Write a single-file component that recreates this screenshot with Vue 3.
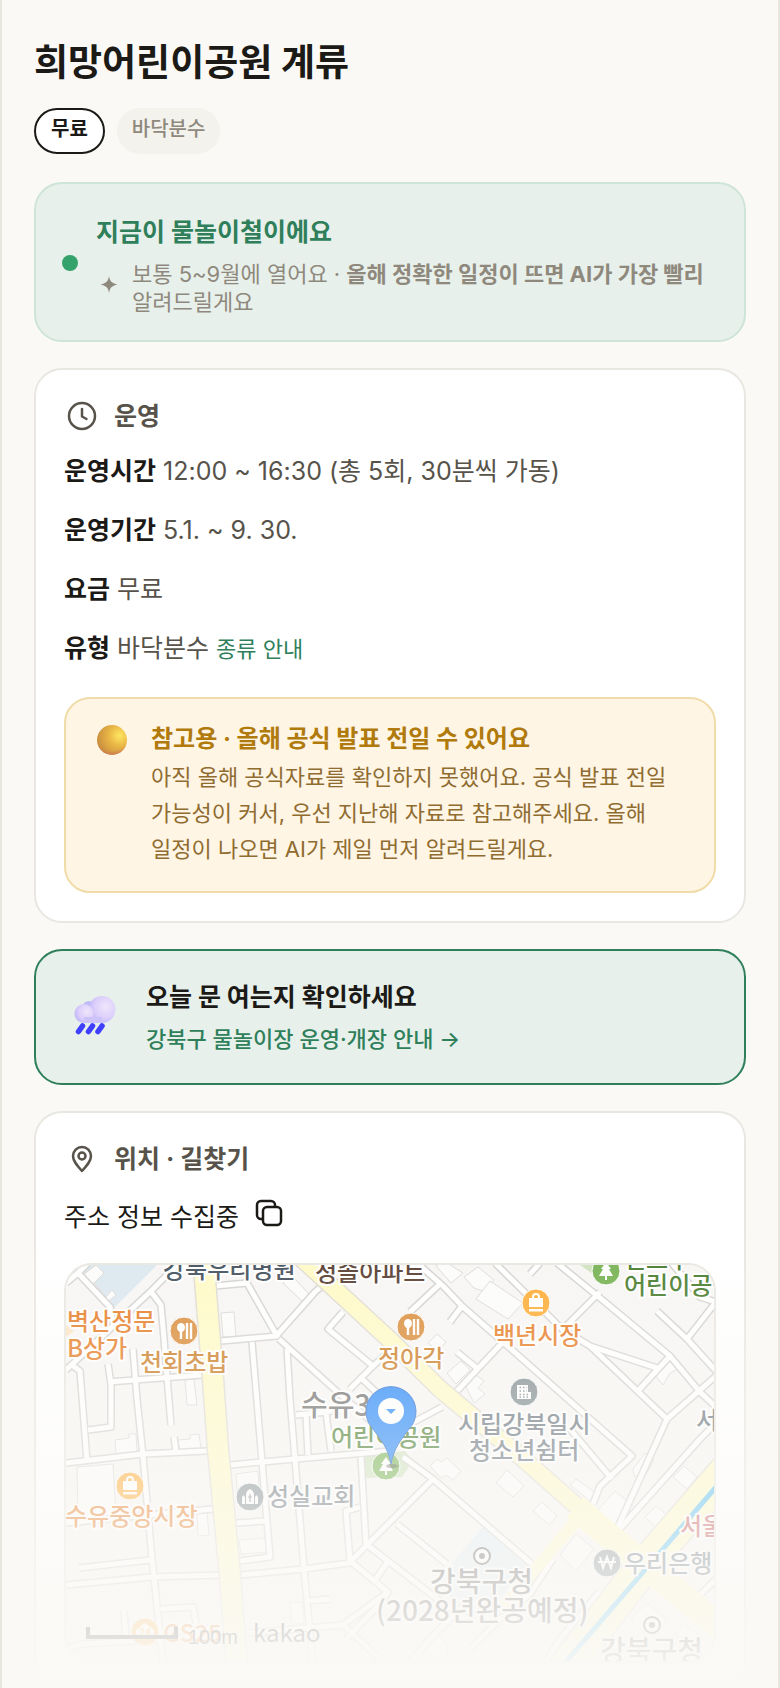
<script setup>
import { ref } from 'vue'

// Datos del lugar
const lugar = {
  nombre: '희망어린이공원 계류',
  precio: '무료',
  tipo: '바닥분수',
  direccion: '주소 정보 수집중'
}

const filas = [
  { etiqueta: '운영시간', valor: '12:00 ~ 16:30 (총 5회, 30분씩 가동)' },
  { etiqueta: '운영기간', valor: '5.1. ~ 9. 30.' },
  { etiqueta: '요금', valor: '무료' },
  { etiqueta: '유형', valor: '바닥분수', enlace: '종류 안내' }
]

// Mapa: calles blancas
const calles = [
  '66,1371 110,1330 150,1293 179,1264',
  '66,1284 78,1274 110,1308 114,1328',
  '78,1274 88,1264',
  '152,1294 161,1306 164,1340 167,1378 171,1426',
  '72,1366 80,1372 87,1462',
  '133,1350 137,1400 143,1457 152,1560 157,1607 163,1666',
  '108,1365 111,1385 111,1428 88,1431',
  '108,1383 202,1376',
  '66,1464 143,1455 207,1452',
  '174,1438 176,1453',
  '66,1524 148,1516 213,1510',
  '66,1586 152,1578 222,1576',
  '79,1569 150,1561',
  '66,1650 82,1645 228,1636',
  '160,1610 193,1608 198,1636',
  '124,1612 126,1640',
  '215,1287 247,1284 277,1337 221,1342',
  '277,1336 315,1293 332,1278',
  '279,1340 343,1398 392,1440',
  '252,1343 262,1463 270,1558 240,1562',
  '287,1350 290,1400 295,1460 304,1570 313,1666',
  '230,1466 295,1460 390,1452',
  '296,1416 318,1414 332,1412',
  '306,1416 308,1456',
  '326,1414 331,1452',
  '236,1524 266,1522',
  '240,1576 304,1570 349,1564 367,1546 433,1480',
  '361,1458 366,1545 388,1562 440,1602 470,1622',
  '360,1508 346,1512 350,1562 388,1593 343,1626 380,1660',
  '388,1562 376,1580',
  '388,1593 380,1605 346,1640',
  '247,1634 343,1626',
  '308,1602 330,1600',
  '397,1525 447,1565',
  '403,1458 433,1480 533,1566',
  '343,1313 328,1330 373,1367 350,1390',
  '360,1378 410,1425 442,1408',
  '373,1367 392,1350',
  '410,1313 441,1284',
  '417,1264 443,1287 462,1307 503,1343 632,1457 600,1487 593,1505',
  '462,1307 450,1323',
  '503,1343 457,1392',
  '457,1353 478,1370',
  '495,1264 562,1330 590,1347 667,1420',
  '600,1293 563,1330',
  '557,1264 600,1299 670,1357 700,1393 716,1408',
  '530,1275 540,1264',
  '657,1312 687,1340 716,1372',
  '716,1303 687,1340',
  '670,1262 700,1298 716,1303',
  '716,1377 667,1420 617,1530',
  '670,1357 637,1393',
  '590,1347 657,1369',
  '570,1430 612,1480',
  '617,1533 700,1440 716,1424',
  '553,1560 530,1595 500,1620 470,1650',
  '600,1592 560,1640 545,1664',
  '716,1580 690,1606',
  '470,1600 430,1640 410,1664'
]

// Mapa: edificios
const edificios = [
  '83,1276 96,1266 104,1274 94,1284 106,1298 112,1291 116,1296 104,1306',
  '221,1314 234,1313 236,1338 223,1338',
  '283,1284 292,1277 310,1296 303,1303',
  '185,1381 194,1380 197,1406 187,1406',
  '115,1441 129,1439 129,1435 136,1435 137,1453 116,1455',
  '178,1441 190,1440 190,1436 199,1435 201,1449 180,1452',
  '197,1515 207,1513 209,1536 198,1537',
  '77,1468 113,1465 116,1520 78,1522',
  '236,1475 258,1472 260,1500 238,1502',
  '239,1541 266,1539 267,1553 241,1555',
  '290,1604 302,1603 304,1624 292,1625',
  '436,1267 444,1262 463,1274 451,1284',
  '464,1278 478,1268 494,1281 483,1292 474,1289',
  '476,1300 490,1282 523,1304 508,1320',
  '428,1344 437,1335 446,1343 439,1352',
  '447,1374 461,1362 470,1371 456,1385',
  '466,1388 476,1376 484,1382 478,1389 485,1395 474,1404',
  '653,1374 670,1360 678,1370 670,1374 663,1386',
  '430,1467 437,1460 441,1463 447,1459 461,1472 453,1481 446,1476 441,1479',
  '496,1484 507,1471 524,1487 513,1498',
  '533,1512 542,1503 557,1517 549,1526',
  '570,1486 576,1480 596,1494 590,1502',
  '633,1470 645,1454 654,1461 643,1480 634,1477',
  '673,1478 684,1467 697,1478 687,1490',
  '645,1518 656,1507 668,1517 657,1529',
  '598,1511 615,1492 634,1508 616,1527',
  '560,1556 576,1535 594,1550 584,1562 576,1572',
  '630,1620 647,1604 668,1622 650,1640',
  '675,1634 684,1624 702,1640 694,1650',
  '420,1650 438,1636 448,1646 446,1662'
]

// Mapa: textos
const textos = [
  { t: '강북우리병원', x: 163, y: 1279, c: 'hospital' },
  { t: '정솔아파트', x: 315, y: 1282, c: 'piso' },
  { t: '벽산정문', x: 67, y: 1331, c: 'tienda' },
  { t: 'B상가', x: 67, y: 1358, c: 'tienda' },
  { t: '천회초밥', x: 140, y: 1372, c: 'comida' },
  { t: '정아각', x: 378, y: 1368, c: 'comida' },
  { t: '백년시장', x: 493, y: 1345, c: 'tienda' },
  { t: '인트구', x: 624, y: 1269, c: 'parque' },
  { t: '어린이공원', x: 624, y: 1295, c: 'parque' },
  { t: '수유3동', x: 301, y: 1417, c: 'barrio' },
  { t: '어린이공원', x: 331, y: 1447, c: 'parque' },
  { t: '시립강북일시', x: 458, y: 1434, c: 'gris' },
  { t: '청소년쉼터', x: 469, y: 1460, c: 'gris' },
  { t: '서울', x: 696, y: 1430, c: 'gris' },
  { t: '수유중앙시장', x: 65, y: 1526, c: 'tienda' },
  { t: '성실교회', x: 267, y: 1506, c: 'gris' },
  { t: '서울', x: 680, y: 1536, c: 'rojo' },
  { t: '우리은행', x: 624, y: 1573, c: 'gris' },
  { t: '강북구청', x: 430, y: 1593, c: 'oficina' },
  { t: '(2028년완공예정)', x: 376, y: 1622, c: 'oficina' },
  { t: '강북구청', x: 600, y: 1662, c: 'oficina' },
  { t: 'GS25', x: 163, y: 1643, c: 'tienda' }
]

const copiado = ref(false)

const copiarDireccion = async () => {
  await navigator.clipboard?.writeText(lugar.direccion)
  copiado.value = true
}
</script>

<template>
  <main class="pagina">
    <header class="cabecera">
      <h1>{{ lugar.nombre }}</h1>
      <div class="etiquetas">
        <span class="etiqueta activa">{{ lugar.precio }}</span>
        <span class="etiqueta">{{ lugar.tipo }}</span>
      </div>
    </header>

    <section class="aviso">
      <span class="punto"></span>
      <div>
        <h2>지금이 물놀이철이에요</h2>
        <div class="aviso-detalle">
          <svg class="estrella" viewBox="0 0 26 48" aria-hidden="true">
            <path d="M13 16c1 5.500 2.500 7 8.500 8.500-6 1.500-7.500 3-8.500 8.500-1-5.500-2.500-7-8.500-8.500 6-1.500 7.500-3 8.500-8.500z" fill="#8f897d" />
          </svg>
          <p>보통 5~9월에 열어요 · <strong>올해 정확한 일정이 뜨면 AI가 가장 빨리</strong> 알려드릴게요</p>
        </div>
      </div>
    </section>

    <section class="tarjeta">
      <h2 class="titulo">
        <svg class="icono" viewBox="0 0 36 36" aria-hidden="true">
          <circle cx="18" cy="18" r="13" />
          <path d="M18 11v7.500l4.500 2.500" />
        </svg>
        운영
      </h2>
      <div class="filas">
        <p v-for="fila in filas" :key="fila.etiqueta">
          <strong>{{ fila.etiqueta }}</strong> {{ fila.valor }}
          <a v-if="fila.enlace" href="#tipos">{{ fila.enlace }}</a>
        </p>
      </div>
      <div class="nota">
        <svg class="bola" viewBox="0 0 30 30" aria-hidden="true">
          <defs>
            <radialGradient id="oro" cx="0.75" cy="0.35" r="0.75">
              <stop offset="0" stop-color="#ffe660" />
              <stop offset="0.5" stop-color="#e8b445" />
              <stop offset="1" stop-color="#c99040" />
            </radialGradient>
            <radialGradient id="brillo" cx="0.5" cy="0.2" r="0.82">
              <stop offset="0.8" stop-color="#d07058" stop-opacity="0" />
              <stop offset="1" stop-color="#d07058" stop-opacity="0.8" />
            </radialGradient>
          </defs>
          <circle cx="15" cy="15" r="15" fill="url(#oro)" />
          <circle cx="15" cy="15" r="15" fill="url(#brillo)" />
        </svg>
        <div>
          <h3>참고용 · 올해 공식 발표 전일 수 있어요</h3>
          <p>아직 올해 공식자료를 확인하지 못했어요. 공식 발표 전일 가능성이 커서, 우선 지난해 자료로 참고해주세요. 올해 일정이 나오면 AI가 제일 먼저 알려드릴게요.</p>
        </div>
      </div>
    </section>

    <a class="consulta" href="#aviso-oficial">
      <svg class="nube" viewBox="0 3 60 48" aria-hidden="true">
        <defs>
          <radialGradient id="lila" cx="0.65" cy="0.4" r="0.7">
            <stop offset="0" stop-color="#efe6fb" />
            <stop offset="0.6" stop-color="#dccffb" />
            <stop offset="1" stop-color="#bdb4f7" />
          </radialGradient>
        </defs>
        <circle cx="25" cy="17" r="7" fill="#c0baf8" />
        <path d="M20 18h18v14H20z" fill="#d3c8fb" />
        <circle cx="38" cy="18.500" r="13.500" fill="url(#lila)" />
        <circle cx="20" cy="22.500" r="9.500" fill="url(#lila)" />
        <path d="M20 26h18v6H20z" fill="#cdc3fa" />
        <g stroke="#3f3fff" stroke-width="5.500" stroke-linecap="round">
          <path d="M18.500 35l-4 5.500" />
          <path d="M28.500 35l-4 5.500" />
          <path d="M38 35l-4 5.500" />
        </g>
      </svg>
      <span>
        <strong>오늘 문 여는지 확인하세요</strong>
        <em>강북구 물놀이장 운영·개장 안내 →</em>
      </span>
    </a>

    <section class="tarjeta">
      <h2 class="titulo">
        <svg class="icono" viewBox="0 0 36 36" aria-hidden="true">
          <path d="M18 30C13 24.500 9 20 9 15a9 9 0 0 1 18 0c0 5-4 9.500-9 15z" />
          <circle cx="18" cy="15" r="3.500" />
        </svg>
        위치 · 길찾기
      </h2>
      <div class="direccion">
        <span>{{ lugar.direccion }}</span>
        <button type="button" :aria-label="copiado ? '복사됨' : '주소 복사'" @click="copiarDireccion">
          <svg viewBox="0 0 28 28" aria-hidden="true">
            <rect x="8" y="8" width="18" height="18" rx="4" />
            <path d="M8 20H6a4 4 0 0 1-4-4V6a4 4 0 0 1 4-4h10a4 4 0 0 1 4 4v2" />
          </svg>
        </button>
      </div>

      <div class="mapa">
        <svg viewBox="66 1266 648 396" preserveAspectRatio="xMidYMid slice" role="img" aria-label="지도">
          <rect x="0" y="1200" width="800" height="520" fill="#f7f6f4" />
          <polygon points="78,1266 113,1310 157,1266" fill="#dbe7ef" />
          <polygon points="361,1457 405,1452 413,1462 402,1478 363,1479" fill="#cfe3bd" />
          <polygon points="580,1266 612,1266 606,1284" fill="#cfe3bd" />
          <polygon points="453,1563 483,1528 527,1566 500,1600 450,1600" fill="#e0ebf2" />
          <polygon points="66,1326 74,1332 66,1338" fill="#fbe3c4" />

          <polygon v-for="e in edificios" :key="e" :points="e" class="edificio" />
          <polyline v-for="c in calles" :key="'b' + c" :points="c" class="borde" />
          <polyline v-for="c in calles" :key="'c' + c" :points="c" class="calle" />

          <!-- avenidas -->
          <g class="avenida-borde">
            <path d="M203 1256 213 1380 218 1450 230 1577 238 1680" stroke-width="23" />
            <path d="M298 1256 390 1341 440 1390 520 1457 640 1563 730 1636" stroke-width="19" />
            <path d="M728 1470 640 1572 562 1674" stroke-width="36" />
          </g>
          <g class="avenida">
            <path d="M582 1515 500 1612" stroke-width="12" />
            <path d="M203 1256 213 1380 218 1450 230 1577 238 1680" stroke-width="20" />
            <path d="M298 1256 390 1341 440 1390 520 1457 640 1563 730 1636" stroke-width="16" />
            <path d="M575 1508 640 1563 730 1636" stroke-width="26" />
            <path d="M728 1470 640 1572 562 1674" stroke-width="33" />
          </g>
          <path d="M722 1481 663 1550 564 1665" fill="none" stroke="#52bdf0" stroke-width="5" />

          <text v-for="(n, i) in textos" :key="i" :x="n.x" :y="n.y" :class="['rotulo', n.c]">{{ n.t }}</text>

          <!-- restaurantes -->
          <g v-for="p in [[184, 1332], [411, 1328]]" :key="p[0]" :transform="`translate(${p[0]} ${p[1]})`">
            <circle r="14" fill="#d98b37" class="aro" />
            <ellipse cx="-3" cy="-3.500" rx="4" ry="4.500" fill="#fff" />
            <path d="M-3 0v8M3 -8v16M7 -8v16" stroke="#fff" stroke-width="2.400" />
          </g>
          <!-- mercados -->
          <g v-for="p in [[536, 1304], [130, 1487]]" :key="p[0]" :transform="`translate(${p[0]} ${p[1]})`">
            <circle r="14" fill="#ffab31" class="aro" />
            <path d="M-3 -4v-2a3 3 0 0 1 6 0v2" fill="none" stroke="#fff" stroke-width="2" />
            <path d="M-7 -5H7V4H-7zM-7 6H7V8.500H-7z" fill="#fff" />
          </g>
          <!-- parques -->
          <g v-for="p in [[606, 1272], [386, 1467]]" :key="p[0]" :transform="`translate(${p[0]} ${p[1]})`">
            <circle r="14" fill="#75b150" class="aro" />
            <path d="M0 -9 5 -2H3L7 5H1V9H-1V5H-7L-3 -2H-5z" fill="#fff" />
          </g>
          <!-- centro juvenil -->
          <g transform="translate(524 1393)">
            <circle r="14" fill="#7e8a8f" class="aro" />
            <path d="M-7 -7H4V0H7V7H-7z" fill="#fff" />
            <path d="M-4.500 -4.500H3M-4.500 -1H3M-4.500 2.500H6M-4.500 5H6" stroke="#7e8a8f" stroke-width="1.500" stroke-dasharray="1.500 2" />
          </g>
          <!-- iglesia -->
          <g transform="translate(250 1498)">
            <circle r="14" fill="#7e8a8f" class="aro" />
            <path d="M-4 7V-3Q-3 -7 0 -8Q3 -7 4 -3V7zM-8 7V0L-6.500 -2L-5 0V7zM8 7V0L6.500 -2L5 0V7z" fill="#fff" />
            <path d="M0 -3v8M-2 0h4" stroke="#7e8a8f" stroke-width="1.200" />
          </g>
          <!-- banco -->
          <g transform="translate(607 1564)">
            <circle r="14" fill="#7e8a8f" class="aro" />
            <path d="M-7 -6l3 11 4-11 4 11 3-11M-9 -1H9" fill="none" stroke="#fff" stroke-width="2" />
          </g>
          <!-- tienda 24h -->
          <g transform="translate(145 1633)">
            <circle r="14" fill="#ffab31" class="aro" />
            <path d="M0 -9 9 -2V7H-9V-2z" fill="#fff" />
            <text x="0" y="4" text-anchor="middle" class="hora">24</text>
          </g>
          <g v-for="p in [[482, 1557], [652, 1626]]" :key="p[0]" :transform="`translate(${p[0]} ${p[1]})`">
            <circle r="8" fill="#fff" stroke="#555" stroke-width="2" />
            <circle r="3" fill="#555" />
          </g>

          <!-- marcador -->
          <ellipse cx="392" cy="1467" rx="6" ry="2" fill="#333" opacity="0.5" />
          <path d="M391 1465C388 1448 380 1440 373 1430A25 25 0 1 1 409 1430C402 1440 394 1448 391 1465z" fill="#2185fa" stroke="#1a62cf" />
          <circle cx="391" cy="1412" r="13" fill="#fff" />
          <path d="M386 1410h10l-5 5z" fill="#2185fa" />

          <!-- escala -->
          <path d="M88 1628v10h88v-10" fill="none" stroke="#222" stroke-width="4" />
          <text x="188" y="1645" class="escala">100m</text>
          <text x="253" y="1643" class="marca">kakao</text>
        </svg>
      </div>
    </section>

    <div class="velo"></div>
  </main>
</template>

<style>
body {
  background: #faf9f6;
}
</style>

<style scoped>
.pagina {
  position: relative;
  box-sizing: border-box;
  display: flex;
  flex-direction: column;
  gap: 26px;
  max-height: 100vh;
  overflow: hidden;
  padding: 32px 32px 0;
  border: solid #e8e6df;
  border-width: 0 2px;
  background: #faf9f6;
  color: #1c1a17;
  font-family: Inter, 'Noto Sans CJK KR', sans-serif;
  font-size: 25px;
  line-height: 40px;
  word-break: keep-all;
}

.pagina > * {
  flex-shrink: 0;
}

h1,
h2,
h3,
p {
  margin: 0;
}

.cabecera {
  display: flex;
  flex-direction: column;
  gap: 14px;
  padding-bottom: 2px;
}

h1 {
  font-size: 37px;
  font-weight: 700;
  line-height: 62px;
}

.etiquetas {
  display: flex;
  gap: 12px;
}

.etiqueta {
  box-sizing: border-box;
  height: 46px;
  padding: 0 15px;
  border-radius: 23px;
  background: #f3f2ed;
  color: #8f897d;
  font-size: 20px;
  font-weight: 500;
  line-height: 42px;
}

.etiqueta.activa {
  border: 2px solid #1c1a17;
  background: #fff;
  color: #1c1a17;
  font-weight: 700;
  line-height: 38px;
}

.aviso {
  display: flex;
  align-items: center;
  gap: 18px;
  padding: 26px 26px 24px;
  border: 2px solid #cfe4d8;
  border-radius: 28px;
  background: #e8f0eb;
}

.punto {
  flex: none;
  width: 16px;
  height: 16px;
  border-radius: 50%;
  background: #35a26c;
}

.aviso h2 {
  color: #2f7f5b;
  font-size: 25px;
  font-weight: 700;
  line-height: 44px;
}

.aviso-detalle {
  display: flex;
  align-items: flex-start;
  gap: 10px;
  padding-top: 6px;
  color: #8f897d;
  font-size: 22px;
  line-height: 28px;
}

.estrella {
  flex: none;
  width: 26px;
  height: 48px;
}

.tarjeta {
  padding: 28px;
  border: 2px solid #e9e7e1;
  border-radius: 28px;
  background: #fff;
}

.titulo {
  display: flex;
  align-items: center;
  gap: 14px;
  color: #57534a;
  font-size: 25px;
  font-weight: 700;
  line-height: 36px;
}

.icono {
  width: 36px;
  height: 36px;
  fill: none;
  stroke: #57534a;
  stroke-width: 2.5;
  stroke-linecap: round;
  stroke-linejoin: round;
}

.filas {
  display: flex;
  flex-direction: column;
  gap: 19px;
  padding: 17px 0 28px;
  color: #57534a;
}

.filas strong {
  color: #1c1a17;
}

.filas a {
  color: #2f7f5b;
  font-size: 22px;
  text-decoration: none;
}

.nota {
  display: flex;
  align-items: flex-start;
  gap: 24px;
  padding: 20px 31px 24px;
  border: 2px solid #f0dca8;
  border-radius: 26px;
  background: #fff5e5;
}

.bola {
  flex: none;
  width: 30px;
  height: 30px;
  padding-top: 6px;
}

.nota h3 {
  color: #b07a0c;
  font-size: 24px;
  font-weight: 700;
}

.nota p {
  color: #8f6c30;
  font-size: 22px;
  line-height: 36px;
}

.consulta {
  display: flex;
  align-items: center;
  gap: 22px;
  padding: 25px 28px 23px;
  border: 2px solid #2f7f5b;
  border-radius: 28px;
  background: #e8f0eb;
  color: #1c1a17;
  text-decoration: none;
}

.nube {
  flex: none;
  width: 60px;
  height: 48px;
}

.consulta strong,
.consulta em {
  display: block;
  font-style: normal;
  line-height: 42px;
}

.consulta em {
  color: #2f7f5b;
  font-size: 22px;
  font-weight: 500;
}

.direccion {
  display: flex;
  align-items: center;
  gap: 16px;
  padding: 20px 0 26px;
}

.direccion button {
  display: flex;
  padding: 0 0 8px;
  border: none;
  background: none;
  cursor: pointer;
}

.direccion svg {
  width: 28px;
  height: 28px;
  fill: none;
  stroke: #1c1a17;
  stroke-width: 2.5;
}

.mapa {
  overflow: hidden;
  border: 2px solid #e9e7e1;
  border-radius: 28px;
}

.mapa svg {
  display: block;
  width: 100%;
  height: 396px;
}

.borde,
.calle,
.avenida-borde,
.avenida {
  fill: none;
  stroke-linejoin: round;
}

.borde {
  stroke: #d3d2d0;
  stroke-width: 8;
}

.calle {
  stroke: #fff;
  stroke-width: 5;
}

.edificio {
  fill: #fcfcfb;
  stroke: #dad9d7;
}

.avenida-borde {
  stroke: #dfdbd2;
}

.avenida {
  stroke: #fffac6;
}

.aro {
  stroke: #fff;
  stroke-width: 1;
}

.rotulo {
  font-family: 'Noto Sans CJK KR', sans-serif;
  font-size: 24px;
  font-weight: 500;
  stroke: #fff;
  stroke-width: 4px;
  stroke-linejoin: round;
  paint-order: stroke;
}

.hospital {
  fill: #414e59;
}

.piso {
  fill: #553a2d;
}

.tienda {
  fill: #e67a22;
}

.comida {
  fill: #cb7a1e;
}

.parque {
  fill: #447a2a;
}

.gris {
  fill: #64707a;
}

.rojo {
  fill: #c4555a;
}

.barrio {
  fill: #6b6b6b;
  font-size: 29px;
}

.oficina {
  fill: #555;
  font-size: 28px;
}

.hora {
  fill: #ffab31;
  font-family: Roboto, sans-serif;
  font-size: 10px;
  font-weight: 700;
}

.escala {
  fill: #222;
  font-family: 'Liberation Sans', sans-serif;
  font-size: 20px;
}

.marca {
  fill: #222;
  font-family: 'Noto Sans CJK KR', sans-serif;
  font-size: 24px;
}

/* Desvanecido al final de la vista */
.velo {
  position: absolute;
  right: 0;
  bottom: 0;
  left: 0;
  height: 460px;
  background: linear-gradient(rgba(250, 249, 246, 0), #faf9f6);
  pointer-events: none;
}
</style>
